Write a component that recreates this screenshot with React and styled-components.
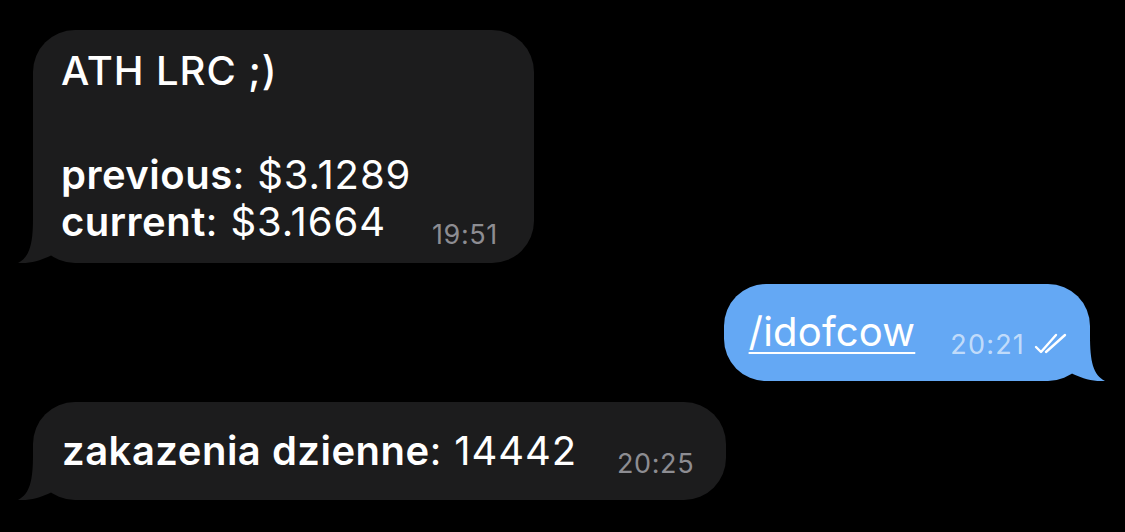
import React from "react";
import styled, { createGlobalStyle } from "styled-components";

const GlobalStyle = createGlobalStyle`
  html, body {
    margin: 0;
    padding: 0;
    background: #000;
  }
  body {
    font-family: "Inter", "Noto Sans", "Liberation Sans", sans-serif;
    -webkit-font-smoothing: antialiased;
  }
`;

const Chat = styled.div`
  width: 1125px;
  height: 532px;
  box-sizing: border-box;
  padding: 30px 35px 0 33px;
  display: flex;
  flex-direction: column;
  gap: 21px;
  background: #000;
  overflow: hidden;
`;

const Bubble = styled.div`
  position: relative;
  align-self: ${(p) => (p.$out ? "flex-end" : "flex-start")};
  box-sizing: border-box;
  padding: ${(p) => p.$pad};
  background: ${(p) => (p.$out ? "#64a8f4" : "#1c1c1d")};
  border-radius: 42px;
  color: #fff;
  font-size: 40px;
  line-height: 47px;
  letter-spacing: 0.9px;
`;

const Tail = styled.svg`
  position: absolute;
  bottom: 0;
  ${(p) => (p.$out ? "right: -15px;" : "left: -15px;")}
  width: 45px;
  height: 50px;
  transform: ${(p) => (p.$out ? "scaleX(-1)" : "none")};
`;

const Line = styled.div`
  white-space: nowrap;
  font-weight: ${(p) => p.$weight || 400};
  margin-bottom: ${(p) => p.$gap || 0}px;
`;

const LastLine = styled.div`
  display: flex;
  align-items: flex-end;
  white-space: nowrap;
`;

const B = styled.span`
  font-weight: 600;
  letter-spacing: 0.5px;
`;

const Link = styled.span`
  letter-spacing: 0.2px;
  text-decoration: underline;
  text-decoration-thickness: 2px;
  text-underline-offset: 6px;
`;

const Meta = styled.span`
  display: inline-flex;
  align-items: center;
  gap: 9px;
  margin-left: ${(p) => p.$gap}px;
  font-size: 27px;
  line-height: 21px;
  letter-spacing: ${(p) => (p.$out ? "1.2px" : "0.6px")};
  color: ${(p) => (p.$out ? "rgba(255,255,255,0.62)" : "#8d8d92")};
`;

const Ticks = () => (
  <svg width="34" height="22" viewBox="0 0 34 22" fill="none">
    <path
      d="M2 14 L7 19 L22 2"
      stroke="#fff"
      strokeWidth="2.4"
      strokeLinecap="round"
      strokeLinejoin="round"
    />
    <path d="M12 19 L31 2" stroke="#fff" strokeWidth="2.4" strokeLinecap="round" />
  </svg>
);

const TailShape = ({ color, out }) => (
  <Tail $out={out} viewBox="0 0 45 50">
    <path
      d="M15 0 L15 5 C15 30 12 44 0 50 C12 51 24 47 34 42 L34 0 Z"
      fill={color}
    />
  </Tail>
);

export default function App() {
  return (
    <>
      <GlobalStyle />
      <Chat>
        <Bubble $pad="17px 36px 18px 28px">
          <TailShape color="#1c1c1d" />
          <Line $weight={500} $gap={10}>ATH LRC ;)</Line>
          <Line>&nbsp;</Line>
          <Line>
            <B>previous</B>: $3.1289
          </Line>
          <LastLine>
            <span>
              <B>current</B>: $3.1664
            </span>
            <Meta $gap={46}>19:51</Meta>
          </LastLine>
        </Bubble>

        <Bubble $out $pad="24px 22px 26px 25px">
          <TailShape color="#64a8f4" out />
          <LastLine>
            <Link>/idofcow</Link>
            <Meta $out $gap={35}>
              20:21
              <Ticks />
            </Meta>
          </LastLine>
        </Bubble>

        <Bubble $pad="25px 32px 26px 29px">
          <TailShape color="#1c1c1d" />
          <LastLine>
            <span>
              <B>zakazenia dzienne</B>: 14442
            </span>
            <Meta $gap={40}>20:25</Meta>
          </LastLine>
        </Bubble>
      </Chat>
    </>
  );
}
